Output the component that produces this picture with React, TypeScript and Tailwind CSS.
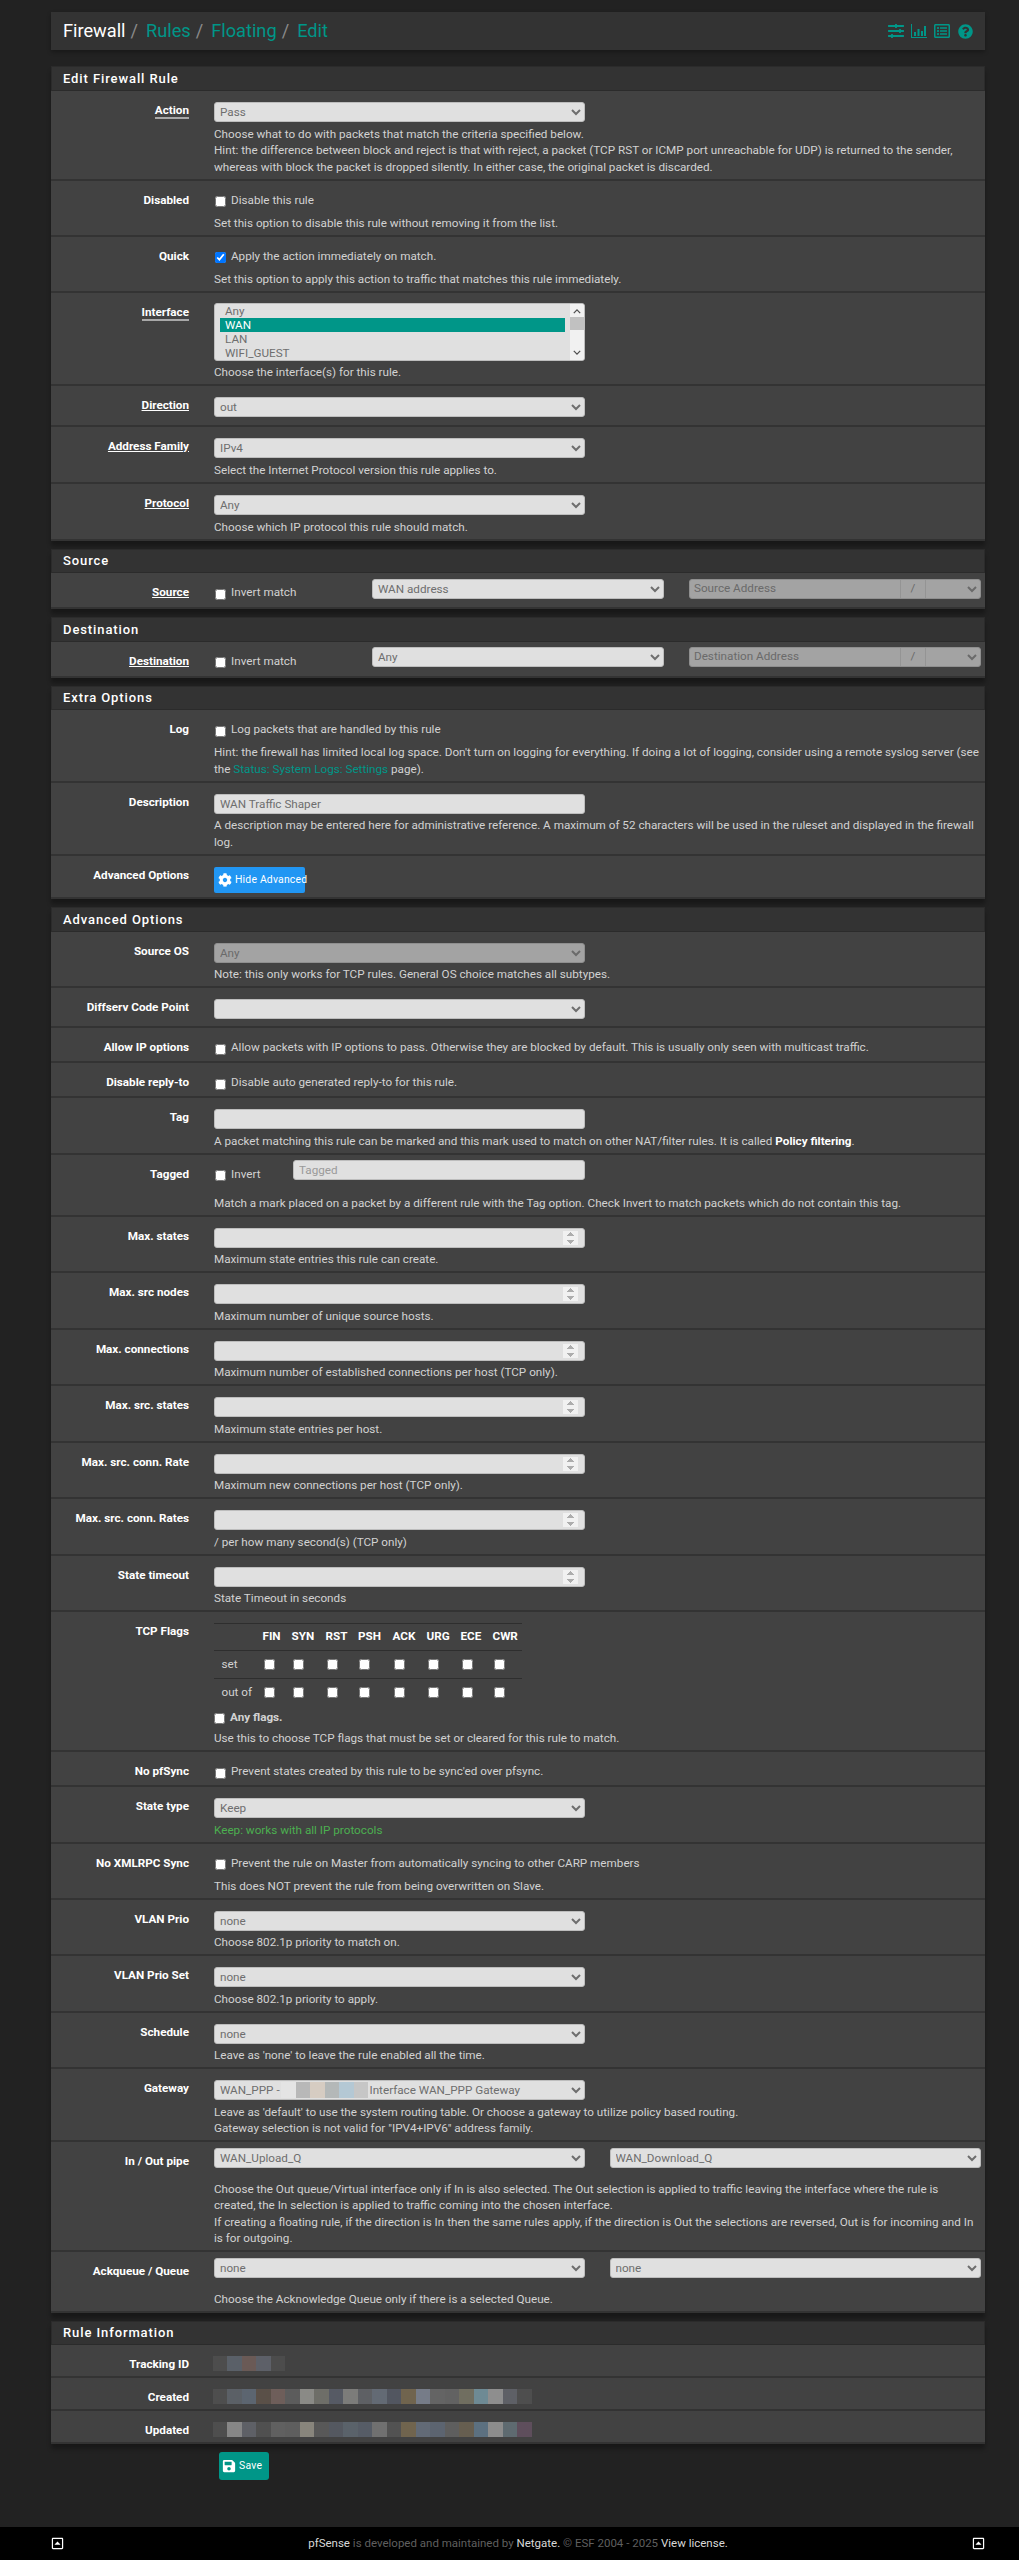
import type { ReactNode } from 'react';
import { FaCog, FaQuestionCircle, FaRegCaretSquareUp, FaRegListAlt, FaSave, FaSlidersH } from 'react-icons/fa';

const selectClass = 'block h-5 rounded-[3px] border border-[#bdbdbd] bg-[#e0e0e0] pl-[1px] text-[11.7px] text-[#6e6e6e]';
const inputClass = 'block h-5 rounded-[3px] border border-[#bdbdbd] bg-[#e0e0e0] px-[5px] text-[11.7px] text-[#6e6e6e] placeholder:text-[#9a9a9a]';

const Select = ({ value = '', className = 'w-full' }: { value?: string; className?: string }) => (
    <select className={`${selectClass} ${className}`}>
        <option>{value}</option>
    </select>
);

const Help = ({ children, className = 'text-[#d2d2d2]' }: { children: ReactNode; className?: string }) => (
    <div className={`text-[11.7px] leading-[16.5px] ${className}`}>{children}</div>
);

const Check = ({ text, checked = false, bold = false }: { text: string; checked?: boolean; bold?: boolean }) => (
    <label className={`flex h-[18.5px] items-center text-[11.7px] text-[#d2d2d2] ${bold ? 'font-bold' : ''}`}>
        <input type="checkbox" defaultChecked={checked} className="mt-[2px] mr-[5px] ml-[1px] size-[11px] shrink-0" />
        {text}
    </label>
);

type RowProps = {
    label: string;
    link?: 'thin' | 'thick';
    children: ReactNode;
    top?: string;
};

const Row = ({ label, link, children, top = 'pt-[11px]' }: RowProps) => (
    <div className="flex border-b-2 border-[#333333] bg-[#424242] pr-[4px] pb-[3.5px]">
        <div className="w-[138px] shrink-0 pt-[11px] text-right text-[11.7px] leading-[16.5px] font-bold text-white">
            {link === 'thick' && <span className="inline-block h-[16.5px] border-b-2 border-[#a8a8a8] leading-[15px]">{label}</span>}
            {link === 'thin' && <span className="underline">{label}</span>}
            {!link && label}
        </div>
        <div className={`ml-[25px] min-w-0 flex-1 ${top}`}>{children}</div>
    </div>
);

// single select of the standard width with an optional help line
const SelectRow = ({ label, value = '', help, link, gap = 'mb-[3.5px]' }: { label: string; value?: string; help?: ReactNode; link?: 'thin' | 'thick'; gap?: string }) => (
    <Row label={label} link={link}>
        <Select value={value} className={`w-[371px] ${gap}`} />
        {help && <Help>{help}</Help>}
    </Row>
);

const NumberRow = ({ label, help }: { label: string; help: string }) => (
    <Row label={label}>
        <input
            type="number"
            className={`${inputClass} mb-[3.5px] w-[371px] pr-[6px] [&::-webkit-inner-spin-button]:opacity-60`}
        />
        <Help>{help}</Help>
    </Row>
);

const CheckRow = ({ label, text, help, checked }: { label: string; text: string; help?: ReactNode; checked?: boolean }) => (
    <Row label={label}>
        <Check text={text} checked={checked} />
        {help && <Help className="mt-[4.5px] text-[#d2d2d2]">{help}</Help>}
    </Row>
);

const Panel = ({ title, children }: { title: string; children: ReactNode }) => (
    <section className="mb-[8px] shadow-[0_5px_4px_rgba(0,0,0,0.3)]">
        <h2 className="flex h-[24.5px] items-center border border-[#2b2b2b] bg-[#333333] pl-[11px] text-[13px] font-medium tracking-[0.9px] text-white">
            {title}
        </h2>
        {children}
    </section>
);

const AddressGroup = ({ placeholder }: { placeholder: string }) => (
    <div className="flex h-5 w-[292px] overflow-hidden rounded-[3px] border border-[#8f8f8f] bg-[#a3a3a3] text-[11.7px] text-[#6a6a6a]">
        <input disabled placeholder={placeholder} className="w-[210px] bg-transparent px-[4px] placeholder:text-[#6a6a6a]" />
        <span className="flex w-[26px] items-center justify-center border-x border-[#949494]">/</span>
        <select disabled className="min-w-0 flex-1 bg-transparent opacity-100">
            <option></option>
        </select>
    </div>
);

const AddressRow = ({ label, placeholder, value }: { label: string; placeholder: string; value: string }) => (
    <Row label={label} link="thin" top="pt-[5.5px]">
        <div className="flex pb-[1px]">
            <div className="w-[158px] pt-[5.5px]">
                <Check text="Invert match" />
            </div>
            <Select value={value} className="w-[292px]" />
            <div className="ml-[25px]">
                <AddressGroup placeholder={placeholder} />
            </div>
        </div>
    </Row>
);

const PairRow = ({ label, left, right, help }: { label: string; left: string; right: string; help: ReactNode }) => (
    <Row label={label} top="pt-[5.5px]">
        <div className="flex gap-[24.5px]">
            <Select value={left} className="w-[371px]" />
            <Select value={right} className="w-[371.5px]" />
        </div>
        <Help className="mt-[13px] text-[#d2d2d2]">{help}</Help>
    </Row>
);

const Blur = ({ tiles, className = '' }: { tiles: string[]; className?: string }) => (
    <div className={`flex ${className}`}>
        {tiles.map((t, i) => (
            <div key={i} className={`h-full w-[14.5px] ${t}`} />
        ))}
    </div>
);

const trackingTiles = ['bg-[#4d4d4d]', 'bg-[#5a6068]', 'bg-[#6a5a56]', 'bg-[#5d6068]', 'bg-[#4c4c4c]'];
const createdTiles = [
    'bg-[#4e4e4e]', 'bg-[#5b6066]', 'bg-[#5c6570]', 'bg-[#5a5048]', 'bg-[#6e5e5a]', 'bg-[#5c5c5c]', 'bg-[#8a8a86]', 'bg-[#6e6e68]',
    'bg-[#565a64]', 'bg-[#7c7c7a]', 'bg-[#5e6064]', 'bg-[#636a74]', 'bg-[#525660]', 'bg-[#70644e]', 'bg-[#767c88]', 'bg-[#646464]',
    'bg-[#626262]', 'bg-[#706e60]', 'bg-[#6e8a94]', 'bg-[#8e8e8e]', 'bg-[#5e6066]', 'bg-[#4e4e4e]',
];
const updatedTiles = [
    'bg-[#4e4e4e]', 'bg-[#868686]', 'bg-[#5e6066]', 'bg-[#505050]', 'bg-[#606060]', 'bg-[#5e5e5e]', 'bg-[#88857c]', 'bg-[#585858]',
    'bg-[#545860]', 'bg-[#5a626a]', 'bg-[#565c66]', 'bg-[#707070]', 'bg-[#525252]', 'bg-[#70644e]', 'bg-[#626a76]', 'bg-[#5c6470]',
    'bg-[#5e5e5e]', 'bg-[#665e50]', 'bg-[#5c7080]', 'bg-[#8c8c8c]', 'bg-[#5e6a70]', 'bg-[#5e4e5c]',
];
const gatewayTiles = ['bg-[#e4e4e4]', 'bg-[#b8b8b8]', 'bg-[#d6ccc2]', 'bg-[#b4b8b8]', 'bg-[#b4c8d4]', 'bg-[#c6c6c6]'];

const flags = ['FIN', 'SYN', 'RST', 'PSH', 'ACK', 'URG', 'ECE', 'CWR'];

const FlagRow = ({ name }: { name: string }) => (
    <tr className="h-[28px] border-t border-[#2e2e2e]">
        <td className="pl-[7.5px] text-[#d2d2d2]">{name}</td>
        {flags.map((f) => (
            <td key={f}>
                <input type="checkbox" className="ml-[1px] block size-[11px]" />
            </td>
        ))}
    </tr>
);

const Footer = () => (
    <footer className="mt-auto flex h-[33px] items-center justify-between bg-black pr-[34px] pl-[51px] text-[11.5px] text-[#5f5f5f]">
        <FaRegCaretSquareUp className="size-[13px] text-white" />
        <p>
            <span className="text-[#d8d8d8]">pfSense</span> is developed and maintained by <span className="text-[#d8d8d8]">Netgate.</span> © ESF 2004 - 2025 <span className="text-[#d8d8d8]">View license.</span>
        </p>
        <FaRegCaretSquareUp className="size-[13px] text-white" />
    </footer>
);

const Crumb = ({ text, last = false }: { text: string; last?: boolean }) => (
    <>
        <span>{text}</span>
        {!last && <span className="mr-[8px] ml-[5px] text-[#8a8a8a]">/</span>}
    </>
);

const App = () => {
    return (
        <div className="flex min-h-[2560px] flex-col bg-[#222222] font-[family-name:Roboto,sans-serif]">
            <div className="pt-[12px] pr-[34px] pl-[51px]">
                {/* breadcrumb bar */}
                <header className="mb-[16px] flex h-[38px] items-center justify-between bg-[#333333] pr-[12px] pl-[12px] shadow-[0_2px_4px_rgba(0,0,0,0.3)]">
                    <h1 className="flex text-[18.2px] text-[#009688]">
                        <span className="text-white">Firewall</span>
                        <span className="mr-[8px] ml-[5px] text-[#8a8a8a]">/</span>
                        <Crumb text="Rules" />
                        <Crumb text="Floating" />
                        <Crumb text="Edit" last />
                    </h1>
                    <div className="flex items-center gap-[7px] text-[#009688]">
                        <FaSlidersH className="size-[16px]" />
                        <svg viewBox="0 0 16 14" className="h-[14px] w-[16px]" fill="currentColor">
                            <path d="M0 0h1v13h15v1H0z" />
                            <path d="M3 8h2v4H3zM6.5 5h2v7h-2zM10 7h2v5h-2zM13 2h2v10h-2z" />
                        </svg>
                        <FaRegListAlt className="size-[16px]" />
                        <FaQuestionCircle className="ml-[1px] size-[15px]" />
                    </div>
                </header>

                <Panel title="Edit Firewall Rule">
                    <SelectRow
                        label="Action"
                        link="thick"
                        value="Pass"
                        gap="mb-[4px]"
                        help={
                            <>
                                Choose what to do with packets that match the criteria specified below.
                                <br />
                                Hint: the difference between block and reject is that with reject, a packet (TCP RST or ICMP port unreachable for UDP) is returned to the sender, whereas with block the packet is dropped silently. In either case, the original packet is discarded.
                            </>
                        }
                    />
                    <CheckRow label="Disabled" text="Disable this rule" help="Set this option to disable this rule without removing it from the list." />
                    <CheckRow label="Quick" text="Apply the action immediately on match." checked help="Set this option to apply this action to traffic that matches this rule immediately." />
                    <Row label="Interface" link="thick" top="pt-[10px]">
                        <div className="mb-[3.5px] flex h-[58px] w-[371px] overflow-hidden rounded-[3px] border border-[#bdbdbd] bg-[#e0e0e0] text-[11.7px] leading-[14px] text-[#6e6e6e]">
                            <ul className="flex-1 pt-[0.5px] pl-[5px]">
                                <li className="pl-[5px]">Any</li>
                                <li className="bg-[#009688] pl-[5px] text-white">WAN</li>
                                <li className="pl-[5px]">LAN</li>
                                <li className="pl-[5px]">WIFI_GUEST</li>
                            </ul>
                            <div className="ml-[5px] flex w-[14px] flex-col items-center bg-[#f1f1f1] text-[#505050]">
                                <svg viewBox="0 0 10 6" className="mt-[5px] mb-[3px] h-[5px] w-[8px]" fill="none" stroke="currentColor" strokeWidth="1.6">
                                    <path d="M1 5l4-4 4 4" />
                                </svg>
                                <div className="h-[13px] w-full bg-[#c1c1c1]" />
                                <svg viewBox="0 0 10 6" className="mt-auto mb-[5px] h-[5px] w-[8px]" fill="none" stroke="currentColor" strokeWidth="1.6">
                                    <path d="M1 1l4 4 4-4" />
                                </svg>
                            </div>
                        </div>
                        <Help>Choose the interface(s) for this rule.</Help>
                    </Row>
                    <SelectRow label="Direction" link="thin" value="out" gap="mb-[4px]" />
                    <SelectRow label="Address Family" link="thin" value="IPv4" gap="mb-[4px]" help="Select the Internet Protocol version this rule applies to." />
                    <SelectRow label="Protocol" link="thin" value="Any" gap="mb-[4px]" help="Choose which IP protocol this rule should match." />
                </Panel>

                <Panel title="Source">
                    <AddressRow label="Source" placeholder="Source Address" value="WAN address" />
                </Panel>

                <Panel title="Destination">
                    <AddressRow label="Destination" placeholder="Destination Address" value="Any" />
                </Panel>

                <Panel title="Extra Options">
                    <CheckRow
                        label="Log"
                        text="Log packets that are handled by this rule"
                        help={
                            <>
                                Hint: the firewall has limited local log space. Don't turn on logging for everything. If doing a lot of logging, consider using a remote syslog server (see the <span className="text-[#009688]">Status: System Logs: Settings</span> page).
                            </>
                        }
                    />
                    <Row label="Description">
                        <input defaultValue="WAN Traffic Shaper" className={`${inputClass} mb-[3.5px] w-[371px]`} />
                        <Help>A description may be entered here for administrative reference. A maximum of 52 characters will be used in the ruleset and displayed in the firewall log.</Help>
                    </Row>
                    <Row label="Advanced Options">
                        <button className="mb-[1px] flex h-[26px] w-[91px] items-center gap-[3px] whitespace-nowrap rounded-[2px] bg-[#2196f3] pl-[4px] text-[10.4px] tracking-[0.2px] text-white">
                            <FaCog className="size-[14px] shrink-0" />
                            Hide Advanced
                        </button>
                    </Row>
                </Panel>

                <Panel title="Advanced Options">
                    <Row label="Source OS">
                        <select disabled className="mb-[3.5px] block h-5 w-[371px] rounded-[3px] border border-[#8f8f8f] bg-[#a3a3a3] pl-[1px] text-[11.7px] text-[#6a6a6a] opacity-100">
                            <option>Any</option>
                        </select>
                        <Help>Note: this only works for TCP rules. General OS choice matches all subtypes.</Help>
                    </Row>
                    <SelectRow label="Diffserv Code Point" />
                    <CheckRow label="Allow IP options" text="Allow packets with IP options to pass. Otherwise they are blocked by default. This is usually only seen with multicast traffic." />
                    <CheckRow label="Disable reply-to" text="Disable auto generated reply-to for this rule." />
                    <Row label="Tag">
                        <input className={`${inputClass} mb-[3.5px] w-[371px]`} />
                        <Help>
                            A packet matching this rule can be marked and this mark used to match on other NAT/filter rules. It is called <b className="text-white">Policy filtering</b>.
                        </Help>
                    </Row>
                    <Row label="Tagged" top="pt-[5.5px]">
                        <div className="flex">
                            <div className="w-[79px] pt-[5.5px]">
                                <Check text="Invert" />
                            </div>
                            <input placeholder="Tagged" className={`${inputClass} w-[292px]`} />
                        </div>
                        <Help className="mt-[10.5px] text-[#d2d2d2]">Match a mark placed on a packet by a different rule with the Tag option. Check Invert to match packets which do not contain this tag.</Help>
                    </Row>
                    <NumberRow label="Max. states" help="Maximum state entries this rule can create." />
                    <NumberRow label="Max. src nodes" help="Maximum number of unique source hosts." />
                    <NumberRow label="Max. connections" help="Maximum number of established connections per host (TCP only)." />
                    <NumberRow label="Max. src. states" help="Maximum state entries per host." />
                    <NumberRow label="Max. src. conn. Rate" help="Maximum new connections per host (TCP only)." />
                    <NumberRow label="Max. src. conn. Rates" help="/ per how many second(s) (TCP only)" />
                    <NumberRow label="State timeout" help="State Timeout in seconds" />
                    <Row label="TCP Flags">
                        <table className="w-[308px] table-fixed text-left text-[11.7px]">
                            <colgroup>
                                <col className="w-[48.5px]" />
                                <col className="w-[29px]" />
                                <col className="w-[34px]" />
                                <col className="w-[32.5px]" />
                                <col className="w-[34.5px]" />
                                <col className="w-[34px]" />
                                <col className="w-[34px]" />
                                <col className="w-[32px]" />
                                <col />
                            </colgroup>
                            <thead>
                                <tr className="h-[27px] border-t border-[#2e2e2e] text-white">
                                    <th />
                                    {flags.map((f) => (
                                        <th key={f} className="font-bold">{f}</th>
                                    ))}
                                </tr>
                            </thead>
                            <tbody>
                                <FlagRow name="set" />
                                <FlagRow name="out of" />
                            </tbody>
                        </table>
                        <div className="mt-[2px] -ml-[1px]">
                            <Check text="Any flags." bold />
                        </div>
                        <Help className="mt-[3px] text-[#d2d2d2]">Use this to choose TCP flags that must be set or cleared for this rule to match.</Help>
                    </Row>
                    <CheckRow label="No pfSync" text="Prevent states created by this rule to be sync'ed over pfsync." />
                    <Row label="State type">
                        <Select value="Keep" className="mb-[3.5px] w-[371px]" />
                        <Help className="text-[#4caf50]">Keep: works with all IP protocols</Help>
                    </Row>
                    <CheckRow label="No XMLRPC Sync" text="Prevent the rule on Master from automatically syncing to other CARP members" help="This does NOT prevent the rule from being overwritten on Slave." />
                    <SelectRow label="VLAN Prio" value="none" help="Choose 802.1p priority to match on." />
                    <SelectRow label="VLAN Prio Set" value="none" help="Choose 802.1p priority to apply." />
                    <SelectRow label="Schedule" value="none" help="Leave as 'none' to leave the rule enabled all the time." />
                    <Row label="Gateway">
                        <div className="relative mb-[3.5px] w-[371px]">
                            <Select value={`WAN_PPP -${'\u00A0'.repeat(31)}Interface WAN_PPP Gateway`} />
                            <Blur tiles={gatewayTiles} className="absolute top-[2px] left-[67px] h-[16px]" />
                        </div>
                        <Help>
                            Leave as 'default' to use the system routing table. Or choose a gateway to utilize policy based routing.
                            <br />
                            Gateway selection is not valid for "IPV4+IPV6" address family.
                        </Help>
                    </Row>
                    <PairRow
                        label="In / Out pipe"
                        left="WAN_Upload_Q"
                        right="WAN_Download_Q"
                        help={
                            <>
                                Choose the Out queue/Virtual interface only if In is also selected. The Out selection is applied to traffic leaving the interface where the rule is created, the In selection is applied to traffic coming into the chosen interface.
                                <br />
                                If creating a floating rule, if the direction is In then the same rules apply, if the direction is Out the selections are reversed, Out is for incoming and In is for outgoing.
                            </>
                        }
                    />
                    <PairRow label="Ackqueue / Queue" left="none" right="none" help="Choose the Acknowledge Queue only if there is a selected Queue." />
                </Panel>

                <Panel title="Rule Information">
                    <Row label="Tracking ID">
                        <Blur tiles={trackingTiles} className="-ml-[1.5px] h-[15px]" />
                    </Row>
                    <Row label="Created">
                        <Blur tiles={createdTiles} className="-ml-[1.5px] h-[15px]" />
                    </Row>
                    <Row label="Updated">
                        <Blur tiles={updatedTiles} className="-ml-[1.5px] h-[15px]" />
                    </Row>
                </Panel>

                <button className="mt-[6px] ml-[168px] flex h-[28px] w-[50px] items-center gap-[3px] rounded-[3px] bg-[#009688] pl-[3px] text-[10.4px] tracking-[0.3px] text-white">
                    <FaSave className="size-[14px]" />
                    Save
                </button>
            </div>
            <Footer />
        </div>
    );
};

export default App;
